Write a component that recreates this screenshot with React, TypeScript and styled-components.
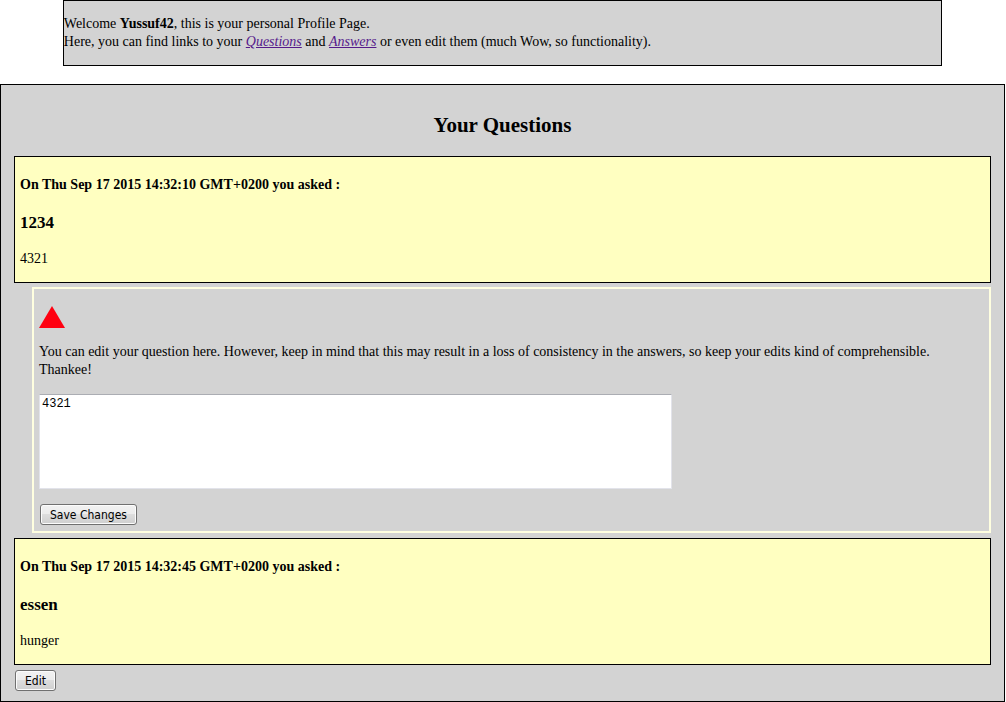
import React, { useState } from "react";
import styled, { createGlobalStyle } from "styled-components";

const GlobalStyle = createGlobalStyle`
  *, *::before, *::after { box-sizing: border-box; }
  body {
    margin: 0;
    background: #fff;
    color: #000;
    font-family: "Liberation Serif", "Times New Roman", serif;
    font-size: 14px;
    line-height: 18px;
  }
`;

const Page = styled.div`
  display: flex;
  flex-direction: column;
  gap: 18px;
  margin-right: 1px;
`;

const Welcome = styled.header`
  align-self: center;
  width: 87.5%;
  padding: 14px 0;
  border: 1px solid #000;
  background: #d3d3d3;
`;

const Paragraph = styled.p`
  margin: 0;
`;

const JumpLink = styled.a`
  color: #551a8b;
  font-style: italic;
  text-decoration: underline;
`;

const Panel = styled.main`
  padding: 27px 13px 10px;
  border: 1px solid #000;
  background: #d3d3d3;
`;

const PanelTitle = styled.h2`
  margin: 0 0 17px;
  font-size: 21px;
  line-height: 27px;
  text-align: center;
`;

const Card = styled.article`
  padding: 19px 5px 14px;
  border: 1px solid #000;
  background: #ffffc1;
`;

const AskedAt = styled.h4`
  margin: 0;
  font-size: 14px;
  line-height: 18px;
`;

const QuestionTitle = styled.h3`
  margin: 19px 0 17px;
  font-size: 17px;
  line-height: 20px;
`;

const EditBox = styled.form`
  margin: 4px 0 5px 18px;
  padding: 17px 5px 6px;
  border: 2px solid #ffffe0;
`;

const Warning = styled.svg`
  display: block;
  width: 26px;
  height: 22px;
  margin-bottom: 15px;
`;

const EditLabel = styled.label`
  display: block;
`;

const EditArea = styled.textarea`
  display: block;
  width: 67%;
  height: 95px;
  margin: 15px 0;
  padding: 2px;
  border: 1px solid #e2e3ea;
  border-top-color: #abadb3;
  border-radius: 1px;
  background: #fff;
  color: #000;
  font-family: "Liberation Mono", "Courier New", monospace;
  font-size: 12px;
  line-height: 14px;
  resize: none;
`;

const Button = styled.button`
  display: block;
  height: 21px;
  margin: 0 1px;
  padding: 0 9px;
  border: 1px solid #707070;
  border-radius: 3px;
  background: linear-gradient(#f2f2f2 0%, #ebebeb 50%, #dddddd 50%, #cfcfcf 100%);
  box-shadow: inset 0 0 0 1px #fcfcfc;
  color: #000;
  font-family: "DejaVu Sans Condensed", Tahoma, sans-serif;
  font-size: 12px;
  line-height: 18px;
  white-space: nowrap;
`;

const Actions = styled.div`
  margin-top: 5px;
`;

interface Question {
  date: string;
  title: string;
  text: string;
}

const questions: Question[] = [
  { date: "Thu Sep 17 2015 14:32:10 GMT+0200", title: "1234", text: "4321" },
  { date: "Thu Sep 17 2015 14:32:45 GMT+0200", title: "essen", text: "hunger" },
];

function QuestionEditor({ text, onSave }: { text: string; onSave: (value: string) => void }) {
  const [draft, setDraft] = useState(text);
  return (
    <EditBox
      onSubmit={(e) => {
        e.preventDefault();
        onSave(draft);
      }}
    >
      <Warning viewBox="0 0 26 22" aria-hidden="true">
        <polygon points="13,0 26,22 0,22" fill="#ff0010" />
      </Warning>
      <EditLabel htmlFor="question-text">
        You can edit your question here. However, keep in mind that this may result in a loss of
        consistency in the answers, so keep your edits kind of comprehensible. Thankee!
      </EditLabel>
      <EditArea
        id="question-text"
        spellCheck={false}
        value={draft}
        onChange={(e) => setDraft(e.target.value)}
      />
      <Button type="submit">Save Changes</Button>
    </EditBox>
  );
}

export default function App() {
  const [items, setItems] = useState(questions);
  const [editing, setEditing] = useState(0);

  const save = (index: number, text: string) => {
    setItems(items.map((q, i) => (i === index ? { ...q, text } : q)));
    setEditing(-1);
  };

  return (
    <>
      <GlobalStyle />
      <Page>
        <Welcome>
          <Paragraph>
            Welcome <b>Yussuf42</b>, this is your personal Profile Page.
            <br />
            Here, you can find links to your <JumpLink href="#questions">Questions</JumpLink> and{" "}
            <JumpLink href="#answers">Answers</JumpLink> or even edit them (much Wow, so
            functionality).
          </Paragraph>
        </Welcome>
        <Panel id="questions">
          <PanelTitle>Your Questions</PanelTitle>
          {items.map((q, i) => (
            <React.Fragment key={q.date}>
              <Card>
                <AskedAt>On {q.date} you asked :</AskedAt>
                <QuestionTitle>{q.title}</QuestionTitle>
                <Paragraph>{q.text}</Paragraph>
              </Card>
              {editing === i ? (
                <QuestionEditor text={q.text} onSave={(value) => save(i, value)} />
              ) : (
                <Actions>
                  <Button type="button" onClick={() => setEditing(i)}>
                    Edit
                  </Button>
                </Actions>
              )}
            </React.Fragment>
          ))}
        </Panel>
      </Page>
    </>
  );
}
